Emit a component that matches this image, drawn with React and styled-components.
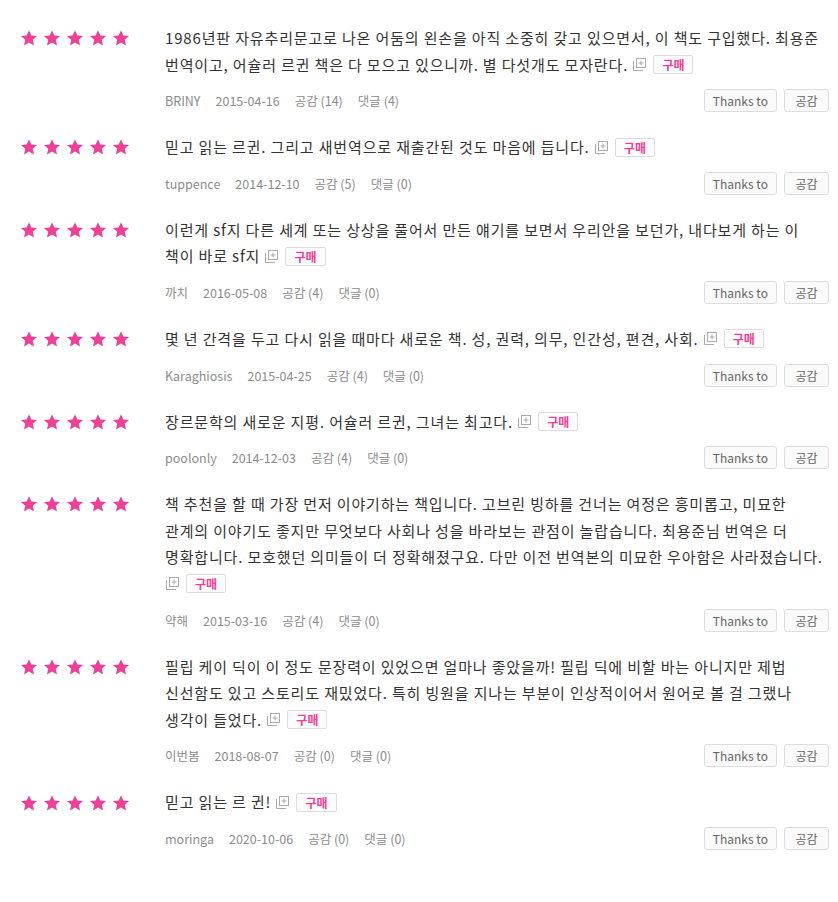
import React from "react";
import styled, { createGlobalStyle } from "styled-components";

const reviews = [
  {
    lines: [
      "1986년판 자유추리문고로 나온 어둠의 왼손을 아직 소중히 갖고 있으면서, 이 책도 구입했다. 최용준",
      "번역이고, 어슐러 르귄 책은 다 모으고 있으니까. 별 다섯개도 모자란다.",
    ],
    user: "BRINY",
    date: "2015-04-16",
    likes: 14,
    comments: 4,
  },
  {
    lines: ["믿고 읽는 르귄. 그리고 새번역으로 재출간된 것도 마음에 듭니다."],
    user: "tuppence",
    date: "2014-12-10",
    likes: 5,
    comments: 0,
  },
  {
    lines: [
      "이런게 sf지 다른 세계 또는 상상을 풀어서 만든 얘기를 보면서 우리안을 보던가, 내다보게 하는 이",
      "책이 바로 sf지",
    ],
    user: "까치",
    date: "2016-05-08",
    likes: 4,
    comments: 0,
  },
  {
    lines: ["몇 년 간격을 두고 다시 읽을 때마다 새로운 책. 성, 권력, 의무, 인간성, 편견, 사회."],
    user: "Karaghiosis",
    date: "2015-04-25",
    likes: 4,
    comments: 0,
  },
  {
    lines: ["장르문학의 새로운 지평. 어슐러 르귄, 그녀는 최고다."],
    user: "poolonly",
    date: "2014-12-03",
    likes: 4,
    comments: 0,
  },
  {
    lines: [
      "책 추천을 할 때 가장 먼저 이야기하는 책입니다. 고브린 빙하를 건너는 여정은 흥미롭고, 미묘한",
      "관계의 이야기도 좋지만 무엇보다 사회나 성을 바라보는 관점이 놀랍습니다. 최용준님 번역은 더",
      "명확합니다. 모호했던 의미들이 더 정확해졌구요. 다만 이전 번역본의 미묘한 우아함은 사라졌습니다.",
    ],
    user: "약해",
    date: "2015-03-16",
    likes: 4,
    comments: 0,
  },
  {
    lines: [
      "필립 케이 딕이 이 정도 문장력이 있었으면 얼마나 좋았을까! 필립 딕에 비할 바는 아니지만 제법",
      "신선함도 있고 스토리도 재밌었다. 특히 빙원을 지나는 부분이 인상적이어서 원어로 볼 걸 그랬나",
      "생각이 들었다.",
    ],
    user: "이번봄",
    date: "2018-08-07",
    likes: 0,
    comments: 0,
  },
  {
    lines: ["믿고 읽는 르 귄!"],
    user: "moringa",
    date: "2020-10-06",
    likes: 0,
    comments: 0,
  },
];

const Star = () => (
  <svg width="18" height="18" viewBox="0 0 24 24">
    <polygon
      points="12,1.5 15.1,8.6 22.8,9.3 17,14.4 18.7,22 12,18 5.3,22 7,14.4 1.2,9.3 8.9,8.6"
      fill="#ef3f96"
    />
  </svg>
);

const ExpandIcon = () => (
  <svg width="13" height="13" viewBox="0 0 13 13">
    <rect x="3.5" y="0.5" width="9" height="9" fill="none" stroke="#aaa" />
    <path d="M8 2.5v5M5.5 5h5" stroke="#aaa" />
    <path d="M0.5 3v9.5H10" fill="none" stroke="#aaa" />
  </svg>
);

export default function App() {
  return (
    <>
      <GlobalStyle />
      <List>
        {reviews.map((r, i) => (
          <Row key={i}>
            <Stars>
              {[0, 1, 2, 3, 4].map((n) => (
                <Star key={n} />
              ))}
            </Stars>
            <Body>
              <Text>
                {r.lines.map((line, j) => (
                  <React.Fragment key={j}>
                    {j > 0 && <br />}
                    {line}
                  </React.Fragment>
                ))}{" "}
                <Extras>
                  <ExpandIcon />
                  <Badge>구매</Badge>
                </Extras>
              </Text>
              <MetaRow>
                <Meta>
                  <span>{r.user}</span>
                  <span>{r.date}</span>
                  <span>공감 ({r.likes})</span>
                  <span>댓글 ({r.comments})</span>
                </Meta>
                <Actions>
                  <Button>Thanks to</Button>
                  <Button $wide>공감</Button>
                </Actions>
              </MetaRow>
            </Body>
          </Row>
        ))}
      </List>
    </>
  );
}

const GlobalStyle = createGlobalStyle`
  body {
    margin: 0;
    background: #fff;
    font-family: "Noto Sans CJK KR", "Noto Sans", sans-serif;
  }
`;

const List = styled.div`
  padding: 14px 9px 0 20px;
`;

const Row = styled.div`
  display: flex;
  padding: 11px 0 11px;
`;

const Stars = styled.div`
  width: 145px;
  flex-shrink: 0;
  display: flex;
  gap: 5px;
  height: 26.6px;
  align-items: center;

  svg {
    display: block;
  }
`;

const Body = styled.div`
  flex: 1;
  min-width: 0;
`;

const Text = styled.div`
  font-size: 15px;
  line-height: 26.6px;
  letter-spacing: 0.85px;
  color: #333;
  word-break: keep-all;
`;

const Extras = styled.span`
  display: inline-flex;
  align-items: center;
  gap: 7px;
  margin-left: 1px;
  vertical-align: middle;
  letter-spacing: 0;
  position: relative;
  top: -2px;

  svg {
    display: block;
  }
`;

const Badge = styled.span`
  display: inline-block;
  height: 17px;
  line-height: 17px;
  padding: 0 8px;
  border: 1px solid #ddd;
  border-radius: 2px;
  background: #fcfcfc;
  color: #ef3f96;
  font-size: 12px;
  font-weight: 700;
`;

const MetaRow = styled.div`
  display: flex;
  align-items: center;
  justify-content: space-between;
  margin-top: 11px;
  height: 23px;
`;

const Meta = styled.div`
  display: flex;
  gap: 15px;
  font-size: 12.5px;
  color: #8c8c8c;
`;

const Actions = styled.div`
  display: flex;
  gap: 7px;
`;

const Button = styled.button`
  height: 23px;
  padding: 0 ${(p) => (p.$wide ? "10.5px" : "8px")};
  border: 1px solid #ddd;
  border-radius: 3px;
  background: #fafafa;
  color: #666;
  font-family: inherit;
  font-size: 12px;
  line-height: 21px;
  cursor: pointer;
`;
